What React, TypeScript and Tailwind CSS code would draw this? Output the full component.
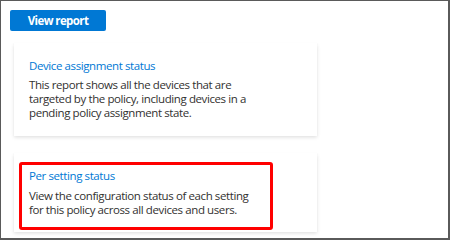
export default function App() {
  const font = { fontFamily: '"Open Sans", "Noto Sans", sans-serif' };
  return (
    <div
      className="w-[450px] h-[240px] bg-white border-l border-t border-r-2 border-b-2 border-[#5a5a5a] pt-[9px] pl-[9px] flex flex-col items-start"
      style={font}
    >
      <button className="w-[96px] h-[21px] rounded-[2px] bg-[#0078d4] text-white text-[11.5px] font-bold tracking-[-0.6px] flex items-center justify-center leading-none">
        View report
      </button>

      <div className="ml-[4px] mt-[12px] w-[303px] h-[93px] bg-white shadow-[0_1.6px_3.6px_rgba(0,0,0,0.13),0_0.3px_0.9px_rgba(0,0,0,0.11)] pt-[16px] pl-[15px] pr-[10px]">
        <div className="text-[#0078d4] text-[11.5px] leading-[14px] tracking-[-0.4px]">
          Device assignment status
        </div>
        <p className="mt-[5px] text-[#323130] text-[11.5px] leading-[14px] tracking-[-0.4px] w-[228px]">
          This report shows all the devices that are targeted by the policy, including devices in a pending policy assignment state.
        </p>
      </div>

      <div className="relative ml-[4px] mt-[17px] w-[303px] h-[79px] bg-white shadow-[0_1.6px_3.6px_rgba(0,0,0,0.13),0_0.3px_0.9px_rgba(0,0,0,0.11)] pt-[16px] pl-[15px] pr-[10px]">
        <div className="text-[#0078d4] text-[11.5px] leading-[14px] tracking-[-0.4px]">
          Per setting status
        </div>
        <p className="mt-[6px] text-[#323130] text-[11.5px] leading-[14px] tracking-[-0.4px] w-[228px]">
          View the configuration status of each setting for this policy across all devices and users.
        </p>
        <div className="absolute left-[5px] top-[9px] w-[254px] h-[68px] border-[3px] border-[#ff0000] rounded-[3px] pointer-events-none" />
      </div>
    </div>
  );
}
